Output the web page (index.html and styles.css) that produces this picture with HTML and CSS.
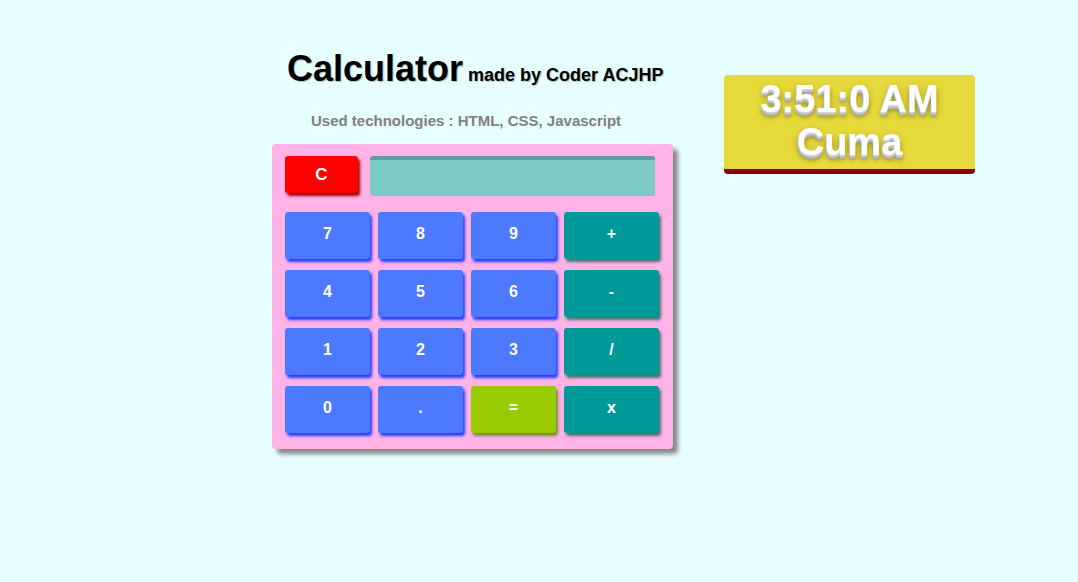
FILE: index.html
```html
<!DOCTYPE html>
<html lang="en">
<head>
<meta charset="utf-8">
<title>Calculator</title>
<link rel="stylesheet" href="styles.css">
</head>
<body>
<div class="page">
  <main class="calc-col">
    <h1 class="title">Calculator<span class="title-sub"> made by Coder ACJHP</span></h1>
    <p class="tech">Used technologies : HTML, CSS, Javascript</p>
    <div class="calc">
      <div class="top-row">
        <button class="btn btn-clear">C</button>
        <div class="display"></div>
      </div>
      <div class="keys">
        <button class="btn btn-num">7</button>
        <button class="btn btn-num">8</button>
        <button class="btn btn-num">9</button>
        <button class="btn btn-op">+</button>
        <button class="btn btn-num">4</button>
        <button class="btn btn-num">5</button>
        <button class="btn btn-num">6</button>
        <button class="btn btn-op">-</button>
        <button class="btn btn-num">1</button>
        <button class="btn btn-num">2</button>
        <button class="btn btn-num">3</button>
        <button class="btn btn-op">/</button>
        <button class="btn btn-num">0</button>
        <button class="btn btn-num">.</button>
        <button class="btn btn-eq">=</button>
        <button class="btn btn-op">x</button>
      </div>
    </div>
  </main>
  <aside class="clock">
    <div class="clock-time">3:51:0 AM</div>
    <div class="clock-day">Cuma</div>
  </aside>
</div>
</body>
</html>
```

FILE: styles.css
```css
html, body {
  margin: 0;
  padding: 0;
}
body {
  background: #e6ffff;
  font-family: "Liberation Sans", Arial, Helvetica, sans-serif;
  height: 582px;
  overflow: hidden;
}
.page {
  display: flex;
  align-items: flex-start;
  padding-left: 272px;
  padding-top: 49px;
}
.calc-col {
  width: 401px;
  display: flex;
  flex-direction: column;
}
.title {
  margin: 0;
  padding-left: 15px;
  font-size: 36px;
  line-height: 40px;
  font-weight: bold;
  color: #000;
  white-space: nowrap;
  text-shadow: 1px 1px 1px rgba(0, 0, 0, 0.25);
}
.title-sub {
  font-size: 18px;
}
.tech {
  margin: 17px 0 0 0;
  padding-left: 39px;
  font-size: 15px;
  line-height: 18px;
  font-weight: bold;
  color: #808080;
  white-space: nowrap;
}
.calc {
  margin-top: 14px;
  width: 401px;
  box-sizing: border-box;
  padding: 12px 14px 15px 13px;
  background: #ffb3e6;
  border-radius: 4px;
  box-shadow: 5px 5px 4px #8a8a8a;
}
.top-row {
  display: flex;
  align-items: flex-start;
  height: 40px;
}
.btn {
  border: none;
  margin: 0;
  padding: 0;
  color: #fff;
  font-family: "Liberation Sans", Arial, Helvetica, sans-serif;
  font-weight: bold;
  font-size: 16px;
  border-radius: 3px;
  display: flex;
  align-items: center;
  justify-content: center;
}
.btn-clear {
  width: 73px;
  height: 37px;
  background: #ff0000;
  box-shadow: 2px 3px 3px #a00000;
  font-size: 17px;
}
.display {
  margin-left: 12px;
  width: 285px;
  height: 40px;
  box-sizing: border-box;
  background: #7ccac6;
  border-top: 4px solid #5f9ea0;
  border-radius: 3px;
}
.keys {
  margin-top: 16px;
  display: grid;
  grid-template-columns: 85px 85px 85px 95px;
  grid-auto-rows: 48px;
  column-gap: 8px;
  row-gap: 10px;
}
.keys .btn {
  height: 47px;
  padding-bottom: 4px;
}
.btn-num {
  background: #4d79ff;
  box-shadow: 2px 3px 3px #1f3cff;
}
.btn-op {
  background: #009999;
  box-shadow: 2px 3px 3px #4f6f6f;
}
.btn-eq {
  background: #99cc00;
  box-shadow: 2px 3px 3px #7a8a3a;
}
.clock {
  margin-left: 51px;
  margin-top: 26px;
  width: 251px;
  height: 99px;
  box-sizing: border-box;
  padding-top: 3px;
  background: #e5d93b;
  border-bottom: 5px solid #8b0000;
  border-radius: 4px;
  color: #fff;
  font-weight: bold;
  font-size: 38px;
  line-height: 43px;
  text-align: center;
  text-shadow:
    0 1px 0 #d6d6d6,
    0 2px 0 #c9c9c9,
    0 3px 0 #bbbbbb,
    0 4px 0 #aaaaaa,
    0 5px 4px rgba(0, 0, 0, 0.3),
    0 2px 8px rgba(0, 0, 0, 0.18);
}
```
